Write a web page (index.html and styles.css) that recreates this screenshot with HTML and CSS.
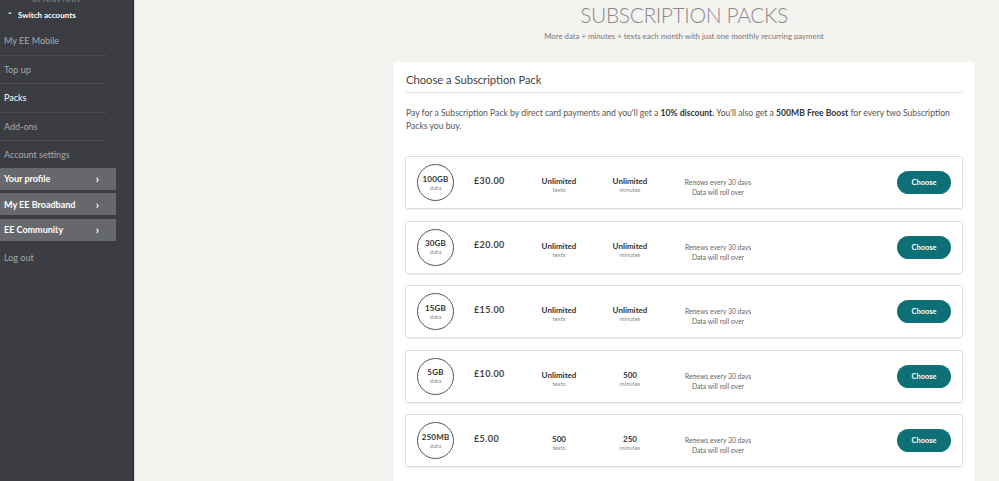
FILE: index.html
```html
<!DOCTYPE html>
<html>
<head>
<meta charset="utf-8">
<link rel="stylesheet" href="styles.css">
</head>
<body>
<div class="page">
  <aside class="sidebar">
    <div class="acct-number">07XXX XXX</div>
    <div class="switch"><span class="switch-caret">&#711;</span>Switch accounts</div>
    <nav class="menu">
      <a class="menu-item">My EE Mobile</a>
      <a class="menu-item">Top up</a>
      <a class="menu-item active">Packs</a>
      <a class="menu-item">Add-ons</a>
      <a class="menu-item last">Account settings</a>
    </nav>
    <div class="boxes">
      <a class="box">Your profile<span class="chev">&#8250;</span></a>
      <a class="box">My EE Broadband<span class="chev">&#8250;</span></a>
      <a class="box">EE Community<span class="chev">&#8250;</span></a>
    </div>
    <a class="logout">Log out</a>
  </aside>
  <main class="main">
    <div class="column">
      <header class="hero">
        <h1 class="title">SUBSCRIPTION PACKS</h1>
        <p class="subtitle">More data + minutes + texts each month with just one monthly recurring payment</p>
      </header>
      <section class="panel">
        <h2 class="panel-title">Choose a Subscription Pack</h2>
        <p class="intro">Pay for a Subscription Pack by direct card payments and you'll get a <strong class="em">10% discount.</strong> You'll also get a <strong class="em">500MB Free Boost</strong> for every two Subscription Packs you buy.</p>
        <div class="packs">
          <div class="pack">
            <div class="circle"><span class="amt">100GB</span><span class="lbl">data</span></div>
            <div class="price">£30.00</div>
            <div class="stat stat-texts"><span class="val">Unlimited</span><span class="lbl">texts</span></div>
            <div class="stat stat-mins"><span class="val">Unlimited</span><span class="lbl">minutes</span></div>
            <div class="renew">Renows every 30 days<br>Data will roll over</div>
            <button class="choose">Choose</button>
          </div>
          <div class="pack">
            <div class="circle"><span class="amt">30GB</span><span class="lbl">data</span></div>
            <div class="price">£20.00</div>
            <div class="stat stat-texts"><span class="val">Unlimited</span><span class="lbl">texts</span></div>
            <div class="stat stat-mins"><span class="val">Unlimited</span><span class="lbl">minutes</span></div>
            <div class="renew">Renews every 30 days<br>Data will roll over</div>
            <button class="choose">Choose</button>
          </div>
          <div class="pack">
            <div class="circle"><span class="amt">15GB</span><span class="lbl">data</span></div>
            <div class="price">£15.00</div>
            <div class="stat stat-texts"><span class="val">Unlimited</span><span class="lbl">texts</span></div>
            <div class="stat stat-mins"><span class="val">Unlimited</span><span class="lbl">minutes</span></div>
            <div class="renew">Renews every 30 days<br>Data will roll over</div>
            <button class="choose">Choose</button>
          </div>
          <div class="pack">
            <div class="circle"><span class="amt">5GB</span><span class="lbl">data</span></div>
            <div class="price">£10.00</div>
            <div class="stat stat-texts"><span class="val">Unlimited</span><span class="lbl">texts</span></div>
            <div class="stat stat-mins"><span class="val">500</span><span class="lbl">minutes</span></div>
            <div class="renew">Renews every 30 days<br>Data will roll over</div>
            <button class="choose">Choose</button>
          </div>
          <div class="pack">
            <div class="circle"><span class="amt">250MB</span><span class="lbl">data</span></div>
            <div class="price">£5.00</div>
            <div class="stat stat-texts"><span class="val">500</span><span class="lbl">texts</span></div>
            <div class="stat stat-mins"><span class="val">250</span><span class="lbl">minutes</span></div>
            <div class="renew">Renews every 30 days<br>Data will roll over</div>
            <button class="choose">Choose</button>
          </div>
        </div>
      </section>
    </div>
  </main>
</div>
</body>
</html>
```

FILE: styles.css
```css
html, body {
  margin: 0;
  padding: 0;
  height: 100%;
  overflow: hidden;
}
body {
  font-family: Lato, "Open Sans", sans-serif;
  background: #f4f3f0;
  color: #444;
}
.page {
  display: flex;
  height: 481px;
}
.sidebar {
  width: 133px;
  flex: none;
  background: #3c3d42;
  border-right: 1px solid #2a2a2d;
  color: #a8a8ab;
  font-size: 9px;
  overflow: hidden;
}
.acct-number {
  margin-top: -6px;
  height: 10px;
  line-height: 10px;
  padding-left: 32px;
  color: #8c8c90;
  font-size: 9px;
}
.switch {
  height: 15px;
  line-height: 15px;
  margin-top: 3px;
  padding-left: 8px;
  color: #fff;
  font-size: 8px;
  font-weight: 700;
}
.switch-caret {
  display: inline-block;
  width: 10px;
  font-size: 9px;
  position: relative;
  top: 2px;
}
.menu {
  display: flex;
  flex-direction: column;
  margin-top: 5px;
  width: 107px;
}
.menu-item {
  display: block;
  height: 27.5px;
  line-height: 28px;
  padding-left: 4px;
  border-bottom: 1px solid #4a4b50;
  color: #a8a8ab;
  font-size: 9px;
}
.menu-item.active {
  color: #fff;
}
.menu-item.last {
  border-bottom: none;
  height: 26.5px;
}
.boxes {
  display: flex;
  flex-direction: column;
  gap: 3.5px;
  margin-top: 0;
  width: 116px;
}
.box {
  display: flex;
  justify-content: space-between;
  align-items: center;
  height: 22px;
  padding: 0 17px 0 4px;
  background: #67686c;
  color: #fff;
  font-size: 9px;
  font-weight: 700;
}
.chev {
  font-size: 11px;
  font-weight: 700;
}
.logout {
  display: block;
  margin-top: 11px;
  padding-left: 4px;
  color: #a8a8ab;
  font-size: 9px;
}
.main {
  flex: 1;
  border-left: 1px solid #dcdbd8;
  padding-left: 259px;
}
.column {
  width: 580px;
}
.hero {
  text-align: center;
  padding-top: 4px;
  height: 62px;
  box-sizing: border-box;
}
.title {
  margin: 0;
  font-family: Lato, sans-serif;
  font-weight: 300;
  font-size: 21px;
  line-height: 22px;
  color: #8a8a8a;
  letter-spacing: -0.4px;
}
.subtitle {
  margin: 5px 0 0;
  font-size: 7.8px;
  color: #777;
}
.panel {
  background: #fff;
  padding: 11px 11px 20px 11px;
  min-height: 420px;
}
.panel-title {
  margin: 0 0 0 1px;
  padding-bottom: 5px;
  font-size: 11.2px;
  font-weight: 400;
  color: #444;
  border-bottom: 1px solid #e2e2e2;
  line-height: 14px;
}
.intro {
  margin: 14px 0 0 1px;
  font-size: 8.6px;
  line-height: 13px;
  color: #555;
}
.intro .em {
  color: #333;
  font-weight: 700;
}
.packs {
  display: flex;
  flex-direction: column;
  gap: 11.5px;
  margin-top: 23px;
}
.pack {
  display: flex;
  align-items: center;
  height: 51px;
  width: 556px;
  border: 1px solid #dedede;
  border-radius: 3px;
  box-shadow: 0 1px 2px rgba(0,0,0,0.08);
}
.circle {
  flex: none;
  margin-left: 11px;
  width: 35px;
  height: 35px;
  border: 1.5px solid #555;
  border-radius: 50%;
  display: flex;
  flex-direction: column;
  align-items: center;
  justify-content: center;
}
.amt {
  font-size: 8px;
  font-weight: 700;
  color: #333;
  line-height: 9px;
  letter-spacing: 0.2px;
}
.lbl {
  font-size: 6px;
  color: #888;
  line-height: 7px;
}
.price {
  flex: none;
  width: 50px;
  margin-left: 20px;
  padding-bottom: 5px;
  font-size: 9px;
  font-weight: 700;
  color: #444;
  letter-spacing: 0.4px;
}
.stat {
  flex: none;
  display: flex;
  flex-direction: column;
  align-items: center;
  padding-top: 5px;
}
.stat-texts {
  width: 70px;
}
.stat-mins {
  width: 72px;
}
.val {
  font-size: 8px;
  font-weight: 700;
  color: #333;
  line-height: 9px;
}
.renew {
  flex: none;
  width: 104px;
  text-align: center;
  font-size: 6.8px;
  line-height: 10px;
  color: #666;
  padding-top: 9px;
}
.choose {
  margin-left: auto;
  margin-right: 11px;
  width: 54px;
  height: 23px;
  border: none;
  border-radius: 12px;
  background: #0e7077;
  color: #fff;
  font-family: Lato, sans-serif;
  font-size: 7.5px;
  font-weight: 700;
  padding: 0;
}
```
